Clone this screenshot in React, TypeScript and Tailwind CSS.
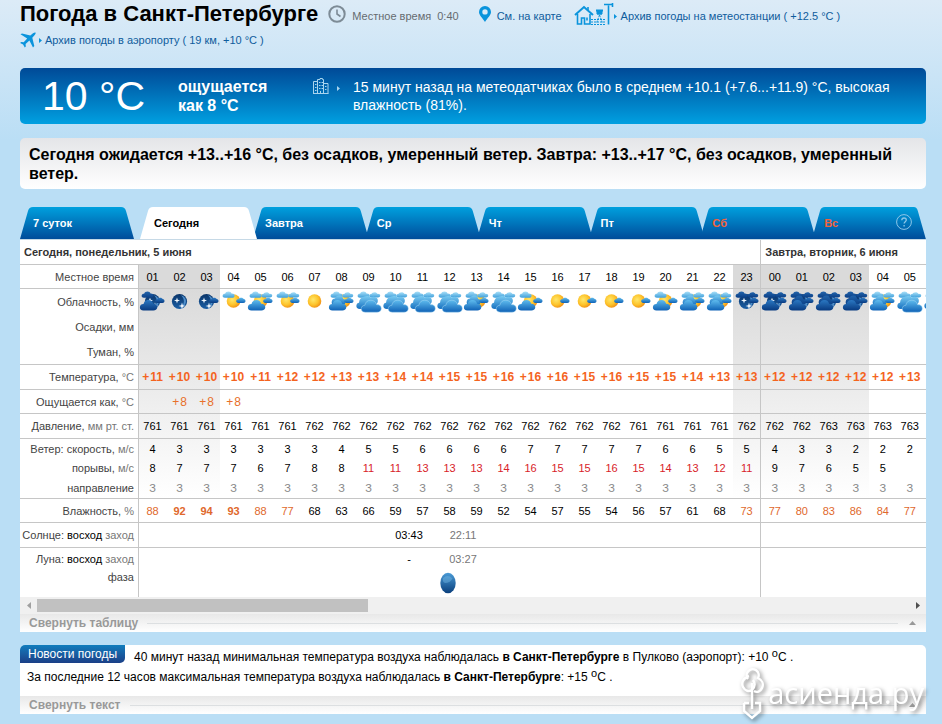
import { Fragment, type ReactNode } from 'react';
import clsx from 'clsx';

interface Hour {
  hour: string;
  sky: string;
  night?: boolean;
  temp?: number;
  feels?: number;
  pressure?: number;
  wind?: number;
  gust?: number;
  humidity?: number;
}

// sky letters: S sun/moon, T top left cloud, U top right cloud, M middle cloud, R right cloud, F front cloud, O overcast
const today: Hour[] = [
  { hour: '01', sky: 'STRF', night: true, temp: 11, pressure: 761, wind: 4, gust: 8, humidity: 88 },
  { hour: '02', sky: 'S', night: true, temp: 10, feels: 8, pressure: 761, wind: 3, gust: 7, humidity: 92 },
  { hour: '03', sky: 'SR', night: true, temp: 10, feels: 8, pressure: 761, wind: 3, gust: 7, humidity: 94 },
  { hour: '04', sky: 'STR', temp: 10, feels: 8, pressure: 761, wind: 3, gust: 7, humidity: 93 },
  { hour: '05', sky: 'STURF', temp: 11, pressure: 761, wind: 3, gust: 6, humidity: 88 },
  { hour: '06', sky: 'STUR', temp: 12, pressure: 761, wind: 3, gust: 7, humidity: 77 },
  { hour: '07', sky: 'S', temp: 12, pressure: 762, wind: 3, gust: 8, humidity: 68 },
  { hour: '08', sky: 'STUMRF', temp: 13, pressure: 762, wind: 4, gust: 8, humidity: 63 },
  { hour: '09', sky: 'TUO', temp: 13, pressure: 762, wind: 5, gust: 11, humidity: 66 },
  { hour: '10', sky: 'TUO', temp: 14, pressure: 762, wind: 5, gust: 11, humidity: 59 },
  { hour: '11', sky: 'TUO', temp: 14, pressure: 762, wind: 6, gust: 13, humidity: 57 },
  { hour: '12', sky: 'TUO', temp: 15, pressure: 762, wind: 6, gust: 13, humidity: 58 },
  { hour: '13', sky: 'STUMRF', temp: 15, pressure: 762, wind: 6, gust: 13, humidity: 59 },
  { hour: '14', sky: 'TUO', temp: 16, pressure: 762, wind: 6, gust: 14, humidity: 52 },
  { hour: '15', sky: 'STRF', temp: 16, pressure: 762, wind: 7, gust: 16, humidity: 54 },
  { hour: '16', sky: 'SR', temp: 16, pressure: 762, wind: 7, gust: 15, humidity: 57 },
  { hour: '17', sky: 'SR', temp: 15, pressure: 762, wind: 7, gust: 15, humidity: 55 },
  { hour: '18', sky: 'SR', temp: 16, pressure: 762, wind: 7, gust: 16, humidity: 54 },
  { hour: '19', sky: 'SR', temp: 15, pressure: 761, wind: 7, gust: 15, humidity: 56 },
  { hour: '20', sky: 'STRF', temp: 15, pressure: 761, wind: 6, gust: 14, humidity: 57 },
  { hour: '21', sky: 'STUMRF', temp: 14, pressure: 761, wind: 6, gust: 13, humidity: 61 },
  { hour: '22', sky: 'STUMRF', temp: 13, pressure: 761, wind: 5, gust: 12, humidity: 68 },
  { hour: '23', sky: 'STUR', night: true, temp: 13, pressure: 762, wind: 5, gust: 11, humidity: 73 },
];

const tomorrow: Hour[] = [
  { hour: '00', sky: 'STURF', night: true, temp: 12, pressure: 762, wind: 4, gust: 9, humidity: 77 },
  { hour: '01', sky: 'STUMRF', night: true, temp: 12, pressure: 762, wind: 3, gust: 7, humidity: 80 },
  { hour: '02', sky: 'STUMRF', night: true, temp: 12, pressure: 763, wind: 3, gust: 6, humidity: 83 },
  { hour: '03', sky: 'STUMRF', night: true, temp: 12, pressure: 763, wind: 2, gust: 5, humidity: 86 },
  { hour: '04', sky: 'STUMRF', temp: 12, pressure: 763, wind: 2, gust: 5, humidity: 84 },
  { hour: '05', sky: 'TUO', temp: 13, pressure: 763, wind: 2, humidity: 77 },
  { hour: '', sky: 'TUO' },
];

const hours = [...today, ...tomorrow];

const days = [
  { name: 'Завтра' },
  { name: 'Ср' },
  { name: 'Чт' },
  { name: 'Пт' },
  { name: 'Сб', weekend: true },
  { name: 'Вс', weekend: true },
];

function SkyDefs() {
  const gradients = [
    ['cloud-day', '#5fbcee', '#0f62b6'],
    ['cloud-mid', '#79cbf2', '#1670c0'],
    ['cloud-light', '#a9e0f8', '#3f9fdb'],
    ['cloud-night', '#2b78c2', '#083a80'],
    ['cloud-dusk', '#2264ab', '#0b3f86'],
    ['moon-disc', '#0a3468', '#1b5fa6'],
    ['phase-disc', '#4a9bd6', '#0a3f7c'],
  ];
  return (
    <svg className="absolute h-0 w-0" aria-hidden="true">
      <defs>
        {gradients.map(([id, from, to]) => (
          <linearGradient key={id} id={id} x1="0" y1="0" x2="0" y2="1">
            <stop offset="0" stopColor={from} />
            <stop offset="1" stopColor={to} />
          </linearGradient>
        ))}
        <radialGradient id="sun-disc" cx="0.4" cy="0.4" r="0.65">
          <stop offset="0" stopColor="#ffe76a" />
          <stop offset="0.6" stopColor="#fdc32b" />
          <stop offset="1" stopColor="#f08c12" />
        </radialGradient>
      </defs>
    </svg>
  );
}

function SkyIcon({ sky, night }: { sky: string; night?: boolean }) {
  const has = (part: string) => sky.includes(part);
  const front = night ? 'url(#cloud-night)' : 'url(#cloud-day)';
  const middle = night ? 'url(#cloud-dusk)' : 'url(#cloud-mid)';
  const back = night ? 'url(#cloud-dusk)' : 'url(#cloud-light)';
  const sunX = has('M') ? 15.5 : 13.5;
  return (
    <svg className="block h-6 w-[27px] overflow-visible" viewBox="0 0 27 24" aria-hidden="true">
      {has('S') && !night && <circle cx={sunX} cy="11" r="6.8" fill="url(#sun-disc)" />}
      {has('S') && night && (
        <>
          <circle cx="13.5" cy="11.5" r="7.6" fill="url(#moon-disc)" />
          <path d="M15 5.2c3.6 1 5.6 4 4.8 7.4-.7 2.8-2.8 4.8-5.8 5.1 2.4-1.6 3.8-3.5 3.9-6 .1-2.600-.9-4.700-2.900-6.500z" fill="#4f8fcb" />
          <path d="M11 7.500l.7 2.300 2.300.7-2.300.7-.7 2.300-.7-2.300-2.300-.7 2.300-.7zM16 12.500l.8 2.700 2.700.8-2.700.8-.8 2.700-.8-2.700-2.700-.8 2.700-.8z" fill="#f4faff" />
        </>
      )}
      {has('T') && (
        <path d="M5 7.800C3.100 7.800 2.300 6.600 2.700 5.300 2.900 4.100 4 3.500 5.100 3.700 5.600 2.300 6.900 1.500 8.500 1.500c1.600 0 2.700.8 3 2 1.800-.2 3.100.7 3.100 2 0 1.400-1 2.300-2.500 2.300z" fill={back} />
      )}
      {has('U') && (
        <path d="M16.500 7.500c-1.500 0-2.300-.8-2.100-2 .1-1 1-1.600 2-1.500.5-1.100 1.700-1.800 3.100-1.800 1.400 0 2.500.7 2.900 1.700 1.700-.2 2.800.6 2.800 1.700 0 1.200-.9 1.900-2.300 1.900z" fill={back} />
      )}
      {has('M') && (
        <path d="M5.500 15C4 15 3.300 13 3.800 11.200 4.200 9.400 5.500 8.400 7 8.600c.8-2.200 2.400-3.300 4.500-3.200 2.100.1 3.500 1.500 3.700 3.600 1.600 0 2.400 1.200 2.300 2.900-.1 1.800-1 3.100-2.500 3.100z" fill={middle} />
      )}
      {has('R') && (
        <path d="M18.500 13c-1.600 0-2.500-.9-2.300-2.200.2-1.200 1.200-1.800 2.300-1.600.5-1 1.500-1.500 2.700-1.500 1.300 0 2.100.6 2.400 1.400 1.100 0 1.900.8 1.900 1.900 0 1.300-.8 2-2.200 2z" fill={front} />
      )}
      {has('F') && (
        <path d="M4.500 20.500C2 20.500.7 19 .9 17c.2-2 1.600-3.200 3.600-3.100.7-2.500 2.400-3.900 5-3.900 2.500 0 4.200 1.400 4.600 3.700 2.500-.1 4.200 1.200 4.200 3.300 0 2.200-1.500 3.500-4 3.500z" fill={front} />
      )}
      {has('O') && (
        <>
          <path d="M5 19c-2.600 0-3.900-1.500-3.600-3.600.2-1.500 1.200-2.500 2.600-2.700C4.300 9.400 6.300 7 9.600 6.600c2.300-1 4.700-.5 6.100 1 2.500-1.600 6.300-.6 7 2 .6 2-.4 4-1.700 5L12 19z" fill={middle} />
          <path d="M10.500 22.200C7.700 22.200 6 20.700 6.200 18.500c.2-1.900 1.600-3.200 3.600-3.200.6-3.300 2.800-5.100 6-5.100 3.100 0 5.200 1.800 5.700 4.400 2.900-.1 4.800 1.400 4.800 3.800 0 2.400-1.600 3.800-4.300 3.800z" fill={front} stroke="#a9daf4" strokeWidth="0.5" />
        </>
      )}
    </svg>
  );
}

function Arrow({ className }: { className?: string }) {
  return (
    <svg className={clsx('h-[5px] w-[3px] shrink-0', className)} viewBox="0 0 3 5" aria-hidden="true">
      <path d="M0 0l3 2.500L0 5z" fill="currentColor" />
    </svg>
  );
}

function StationIcon() {
  return (
    <svg className="h-[22px] w-10 shrink-0" viewBox="0 0 40 22" fill="none" stroke="#0a94dc" aria-hidden="true">
      <path d="M1 12L10 4l9 8" strokeWidth="2" />
      <path d="M14 4v4M3.500 11v10h4v-6h3v6h5.500V11M13 14.500v3" strokeWidth="1.600" />
      <path d="M22 7.500h7M23 10.500h5" strokeWidth="2" />
      <path d="M23 8v3h5V8z" fill="#0a94dc" />
      <path d="M25.500 12l-3 8M25.500 12l3 8M17 16.500h15M17 19h15M17 21.500h15" strokeWidth="1" strokeDasharray="2 1" />
      <path d="M34.500 21.500V2.500M30 1.500h9M38.500 0v4" strokeWidth="1.600" />
    </svg>
  );
}

function Header() {
  return (
    <header className="h-[68px] text-[11px] leading-4 text-[#0f5c9c]">
      <div className="flex h-7 items-center">
        <h1 className="text-[22px] leading-[26px] font-bold text-black">Погода в Санкт-Петербурге</h1>
        <svg className="ml-2.5 h-[18px] w-[18px]" viewBox="0 0 18 18" fill="none" stroke="#7d8b96" aria-hidden="true">
          <circle cx="9" cy="9" r="7.700" strokeWidth="2" />
          <path d="M9 4.500V9l3.500 2.500" strokeWidth="1.600" />
        </svg>
        <span className="ml-1.5 pt-1 text-[#666b70]">
          Местное время<span className="ml-1.5">0:40</span>
        </span>
        <svg className="ml-5 h-4 w-3" viewBox="0 0 12 16" aria-hidden="true">
          <path fillRule="evenodd" d="M6 0a6 6 0 0 1 6 6c0 3-3.500 6-6 10C3.500 12 0 9 0 6a6 6 0 0 1 6-6zm0 3.200a2.700 2.700 0 1 0 0 5.400 2.700 2.700 0 0 0 0-5.400z" fill="#0a94dc" />
        </svg>
        <a href="#map" className="ml-1.5 pt-1">См. на карте</a>
        <a href="#station" className="ml-3 flex items-center">
          <StationIcon />
          <Arrow className="mt-1 text-[#0a94dc]" />
          <span className="ml-1 pt-1">Архив погоды на метеостанции ( +12.5 °C )</span>
        </a>
      </div>
      <a href="#airport" className="flex w-max items-center pt-1">
        <svg className="h-4 w-4" viewBox="0 0 16 16" fill="#0a94dc" aria-hidden="true">
          <path d="M.5 2.300L2 1.400l8.300 2.200L13 1.300c.9-.8 1.900-1.100 2.500-.8.400.6 0 1.600-.8 2.500L12.300 5.700l2 8.300-1.300 1.400L9.400 8.600 5.600 12l.2 2.500-1 1.100-1.700-3-3-1.700 1.100-1 2.500.3L7.200 6.400z" />
        </svg>
        <Arrow className="ml-[3px] text-[#0a94dc]" />
        <span className="ml-[3px]">Архив погоды в аэропорту ( 19 км, +10 °C )</span>
      </a>
    </header>
  );
}

function CurrentWeather() {
  return (
    <section className="flex h-14 items-center rounded-[5px] bg-linear-to-b from-[#004a97] to-[#00a0e1] pl-[22px] text-white">
      <span className="w-[136px] shrink-0 text-[41px] leading-[42px]">10 °C</span>
      <strong className="w-[135px] shrink-0 text-[16px] leading-[19px]">
        ощущается
        <br />
        как 8 °C
      </strong>
      <svg className="mb-5 h-4 w-4 shrink-0" viewBox="0 0 16 16" fill="none" stroke="#a9d4ee" aria-hidden="true">
        <path d="M.5 15.500v-12h4M4.500 15.500v-14H7V.5h2.500v1h1v14M10.500 5.500h4.500v10M0 15.500h15.500M6 4.500h1.500M8.500 4.500H10M6 7.500h1.500M8.500 7.500H10M6 10.500h1.500M8.500 10.500H10M7.500 15v-2M2 6.500h1.500M2 9.500h1.500M2 12.500h1.500M12 8.500h1.500M12 11.500h1.500" />
      </svg>
      <Arrow className="mb-4 ml-2 text-[#a9d4ee]" />
      <p className="mr-8 ml-[13px] text-[14px] leading-[18px]">
        15 минут назад на метеодатчиках было в среднем +10.1 (+7.6...+11.9) °C, высокая влажность (81%).
      </p>
    </section>
  );
}

function DayTabs() {
  return (
    <nav className="mt-[18px] flex h-8 text-[11px] leading-4 font-bold text-white">
      <button className="relative w-[114px] pl-[13px] text-left">
        <svg className="absolute inset-0 h-full w-full" viewBox="0 0 114 32" preserveAspectRatio="none" aria-hidden="true">
          <path d="M0 32L8 4Q9 0 13 0H101Q105 0 106 4L114 32Z" fill="url(#tab-blue)" />
        </svg>
        <span className="relative">7 суток</span>
      </button>
      <button className="relative z-10 ml-1.5 w-[117px] pl-[14px] text-left text-black">
        <svg className="absolute inset-0 h-full w-full" viewBox="0 0 117 32" preserveAspectRatio="none" aria-hidden="true">
          <path d="M0 32L8 4Q9 0 13 0H104Q108 0 109 4L117 32Z" fill="#fff" />
        </svg>
        <span className="relative">Сегодня</span>
      </button>
      <div className="-ml-0.5 grid flex-1 grid-cols-6">
        {days.map((day, i) => {
          const last = i === days.length - 1;
          return (
            <button key={day.name} className={clsx('relative pl-[10px] text-left', day.weekend && 'text-[#f4633a]')}>
              <svg
                className={clsx('absolute inset-y-0 left-0 h-full', last ? 'w-full' : 'w-[calc(100%+1px)]')}
                viewBox="0 0 112 32"
                preserveAspectRatio="none"
                aria-hidden="true"
              >
                <path
                  d={last ? 'M0 32V25L6 4Q7 0 11 0H100Q103 0 104 4L112 32Z' : 'M0 32V25L6 4Q7 0 11 0H100Q104 0 105 4L111 25H112V32Z'}
                  fill="url(#tab-blue)"
                />
              </svg>
              <span className="relative">{day.name}</span>
              {last && (
                <svg className="absolute top-[7px] right-[14px] h-4 w-4" viewBox="0 0 16 16" fill="none" stroke="#8cc6e8" aria-hidden="true">
                  <circle cx="8" cy="8" r="7.400" />
                  <path d="M5.800 6.300C5.800 4.800 6.700 4 8 4s2.300.8 2.300 2c0 1.600-2.200 1.800-2.200 3.600M8.100 11v1.400" strokeWidth="1.300" />
                </svg>
              )}
            </button>
          );
        })}
      </div>
      <svg className="absolute h-0 w-0" aria-hidden="true">
        <linearGradient id="tab-blue" x1="0" y1="0" x2="0" y2="1">
          <stop offset="0" stopColor="#00a0de" />
          <stop offset="1" stopColor="#004c9a" />
        </linearGradient>
      </svg>
    </nav>
  );
}

interface RowProps {
  label: ReactNode;
  height: string;
  line?: boolean;
  cell?: (hour: Hour) => ReactNode;
  children?: ReactNode;
}

function Row({ label, height, line = true, cell, children }: RowProps) {
  return (
    <tr className={clsx(height, line && '[&>*]:border-b')}>
      <th scope="row" className="border-r border-[#c6c6c6] bg-white p-0 pr-1 text-right font-normal text-[#444]">
        {label}
      </th>
      {cell &&
        hours.map((hour, i) => (
          <td key={i} className={clsx('border-[#c6c6c6] p-0 text-center', i === today.length && 'border-l')}>
            {cell(hour)}
          </td>
        ))}
      {children}
    </tr>
  );
}

function Unit({ children }: { children: ReactNode }) {
  return <span className="text-[#777]">{children}</span>;
}

function Degrees({ value }: { value?: number }) {
  if (value === undefined) return null;
  return (
    <>
      <span className="mr-px">+</span>
      {value}
    </>
  );
}

function RiseSet({ rise, set }: { rise: string; set: string }) {
  return (
    <>
      <td colSpan={9} className="border-[#c6c6c6] p-0" />
      <td colSpan={2} className="border-[#c6c6c6] p-0 text-center">{rise}</td>
      <td colSpan={2} className="border-[#c6c6c6] p-0 text-center text-[#777]">{set}</td>
      <td colSpan={10} className="border-[#c6c6c6] p-0" />
      <td colSpan={7} className="border-l border-[#c6c6c6] p-0" />
    </>
  );
}

function ForecastTable() {
  return (
    <div className="overflow-hidden border-t border-[#c6d9e6] bg-white">
      <table className="w-[930px] table-fixed border-separate border-spacing-0 text-[11px] leading-4 text-black">
        <colgroup>
          <col className="w-[119px]" />
          {hours.map((hour, i) => (
            <col
              key={i}
              className={clsx(
                i === today.length ? 'w-[28px]' : 'w-[27px]',
                hour.night && 'bg-[linear-gradient(#dadada_49px,#ffffff_258px)]',
              )}
            />
          ))}
        </colgroup>
        <thead>
          <tr className="h-[25px] text-left text-[#333]">
            <th colSpan={24} className="border-b border-[#c6c6c6] bg-white p-0 pl-1">Сегодня, понедельник, 5 июня</th>
            <th colSpan={7} className="border-b border-l border-[#c6c6c6] bg-white p-0 pl-1">Завтра, вторник, 6 июня</th>
          </tr>
        </thead>
        <tbody>
          <Row label="Местное время" height="h-6" cell={(h) => h.hour} />
          <Row
            label="Облачность, %"
            height="h-[25px]"
            line={false}
            cell={(h) => <SkyIcon sky={h.sky} night={h.night} />}
          />
          <Row label="Осадки, мм" height="h-[25px]" line={false} cell={() => null} />
          <Row label="Туман, %" height="h-[26px]" cell={() => null} />
          <Row
            label={<>Температура, <Unit>°C</Unit></>}
            height="h-[25px]"
            cell={(h) => (
              <span className="text-[12px] font-bold whitespace-nowrap text-[#f4641e]">
                <Degrees value={h.temp} />
              </span>
            )}
          />
          <Row
            label={<>Ощущается как, <Unit>°C</Unit></>}
            height="h-6"
            cell={(h) => (
              <span className="text-[12px] whitespace-nowrap text-[#e8702a]">
                <Degrees value={h.feels} />
              </span>
            )}
          />
          <Row label={<>Давление, <Unit>мм рт. ст.</Unit></>} height="h-[25px]" cell={(h) => h.pressure} />
          <Row label={<>Ветер: скорость, <Unit>м/с</Unit></>} height="h-[19px]" line={false} cell={(h) => h.wind} />
          <Row
            label={<>порывы, <Unit>м/с</Unit></>}
            height="h-[19px]"
            line={false}
            cell={(h) => <span className={clsx(h.gust && h.gust > 10 && 'text-[#d8232a]')}>{h.gust}</span>}
          />
          <Row
            label="направление"
            height="h-[22px]"
            cell={(h) => <span className="text-[#888]">{h.wind ? 'З' : ''}</span>}
          />
          <Row
            label={<>Влажность, <Unit>%</Unit></>}
            height="h-6"
            cell={(h) => (
              <span className={clsx(h.humidity && h.humidity > 70 && 'text-[#e0682c]', h.humidity && h.humidity > 90 && 'font-bold')}>
                {h.humidity}
              </span>
            )}
          />
          <Row
            label={<>Солнце: <span className="text-black">восход</span> <Unit>заход</Unit></>}
            height="h-[25px]"
          >
            <RiseSet rise="03:43" set="22:11" />
          </Row>
          <Row
            label={<>Луна: <span className="text-black">восход</span> <Unit>заход</Unit></>}
            height="h-[21px]"
            line={false}
          >
            <RiseSet rise="-" set="03:27" />
          </Row>
          <Row label={<span className="block h-7">фаза</span>} height="h-7" line={false}>
            <td colSpan={23} className="p-0 pr-1">
              <svg className="mx-auto block h-[22px] w-4" viewBox="0 0 16 22" aria-hidden="true">
                <ellipse cx="8" cy="11" rx="7.700" ry="10.300" fill="url(#phase-disc)" />
                <path d="M3 6Q8 2 12.500 6.500Q10 11 5 11Q2 10 3 6z" fill="#7cc0ea" opacity="0.400" />
              </svg>
            </td>
            <td colSpan={7} className="border-l border-[#c6c6c6] p-0" />
          </Row>
        </tbody>
      </table>
    </div>
  );
}

function ScrollBar() {
  return (
    <div className="flex h-[17px] items-center bg-[#f0f0f0]">
      <svg className="mx-1.5 h-[7px] w-[5px]" viewBox="0 0 5 7" aria-hidden="true">
        <path d="M5 0v7L1 3.500z" fill="#a0a0a0" />
      </svg>
      <div className="h-[13px] flex-1">
        <div className="h-full w-[38%] bg-[#c1c1c1]" />
      </div>
      <svg className="mx-1.5 h-[7px] w-[5px]" viewBox="0 0 5 7" aria-hidden="true">
        <path d="M1 0v7l4-3.500z" fill="#505050" />
      </svg>
    </div>
  );
}

function CollapseButton({ text }: { text: string }) {
  return (
    <button className="flex h-[18px] w-full items-center bg-linear-to-b from-[#e8e8e8] to-white pr-[10px] pl-[9px] text-[12px] leading-4 font-bold text-[#999]">
      {text}
      <span className="mr-[11px] ml-[9px] h-px flex-1 bg-[#dcdfe1]" />
      <svg className="h-1 w-[7px]" viewBox="0 0 7 4" aria-hidden="true">
        <path d="M0 4l3.500-4L7 4z" fill="#999" />
      </svg>
    </button>
  );
}

const news = [
  { before: '40 минут назад минимальная температура воздуха наблюдалась', after: ' в Пулково (аэропорт): +10 ' },
  { before: 'За последние 12 часов максимальная температура воздуха наблюдалась', after: ': +15 ' },
];

function News() {
  return (
    <section className="mt-[13px] overflow-hidden rounded-t-[5px] bg-white">
      <div className="pb-[9px] text-[12px] leading-5 text-black">
        <h2 className="float-left mr-[9px] h-[18px] rounded-br-[5px] bg-linear-to-b from-[#0f7dbd] to-[#1a3f87] px-2 leading-[18px] font-normal text-white">
          Новости погоды
        </h2>
        <p className="pt-[2px] pl-[7px]">
          {news.map((item, i) => (
            <Fragment key={i}>
              {i > 0 && <br />}
              {item.before} <b>в Санкт-Петербурге</b>
              {item.after}
              <sup className="-top-1 text-[11px]">o</sup>C .
            </Fragment>
          ))}
        </p>
      </div>
      <CollapseButton text="Свернуть текст" />
    </section>
  );
}

function Watermark() {
  return (
    <div className="pointer-events-none absolute right-[18px] bottom-1 flex items-center text-white drop-shadow-[2px_2px_2px_rgba(0,0,0,0.5)]">
      <svg className="mr-1 h-[54px] w-6" viewBox="0 0 24 54" fill="none" stroke="currentColor" strokeWidth="2.400" aria-hidden="true">
        <path d="M8 13a6 6 0 1 1 10-1c4 2 6 6 4 10-1.500 3.500-5 5-8 3M9 10c-6 2-8 7-6 11 2 4 6 5 9 3 3-3 3-7 1-10" />
        <path d="M12 17v26M4 37v8l8 7 8-7v-8h-5M4 37h5" />
      </svg>
      <span className="font-['Open_Sans',sans-serif] text-[29px] leading-9">асиенда.ру</span>
    </div>
  );
}

export default function App() {
  return (
    <div className="relative min-h-screen overflow-hidden bg-[#badef5] bg-[linear-gradient(#dcebf7,#badef5_140px)] pr-4 pb-[10px] pl-5 font-['Liberation_Sans',Arial,sans-serif]">
      <SkyDefs />
      <Header />
      <CurrentWeather />
      <p className="mt-[14px] rounded-[5px] bg-linear-to-b from-[#e4e5e8] to-white px-[9px] pt-[7px] pb-[6px] text-[16px] leading-[19px] font-bold text-black">
        Сегодня ожидается +13..+16 °C, без осадков, умеренный ветер. Завтра: +13..+17 °C, без осадков, умеренный ветер.
      </p>
      <DayTabs />
      <ForecastTable />
      <ScrollBar />
      <CollapseButton text="Свернуть таблицу" />
      <News />
      <Watermark />
    </div>
  );
}
